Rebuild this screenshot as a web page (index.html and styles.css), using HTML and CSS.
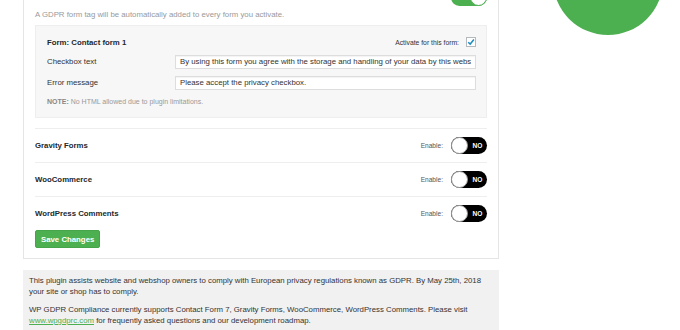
FILE: index.html
```html
<!DOCTYPE html>
<html lang="en">
  <head>
    <meta charset="UTF-8" />
    <title>WP GDPR Compliance</title>
    <link rel="stylesheet" href="styles.css">
  </head>
  <body>
    <div class="page">
      <div class="main">
        <form class="panel">
          <div class="integration">
            <div class="integration-head">
              <h3>Contact Form 7</h3>
              <div class="enable">
                Enable:
                <span class="switch switch-on"><span class="switch-text">YES</span><span class="knob"></span></span>
              </div>
            </div>
            <p class="description">A GDPR form tag will be automatically added to every form you activate.</p>

            <div class="form-box">
              <div class="form-head">
                <strong>Form: Contact form 1</strong>
                <span class="activate">
                  Activate for this form:
                  <span class="checkbox">
                    <svg width="8" height="8" viewBox="0 0 8 8"><path d="M1.2 4.2 L3.2 6.1 L6.9 1.6" fill="none" stroke="#1e8cbe" stroke-width="1.5" /></svg>
                  </span>
                </span>
              </div>
              <div class="field">
                <label>Checkbox text</label>
                <input type="text" value="By using this form you agree with the storage and handling of your data by this website." />
              </div>
              <div class="field">
                <label>Error message</label>
                <input type="text" value="Please accept the privacy checkbox." />
              </div>
              <p class="note"><strong>NOTE:</strong> No HTML allowed due to plugin limitations.</p>
            </div>
          </div>

          <div class="integration">
            <div class="integration-head">
              <h3>Gravity Forms</h3>
              <div class="enable">
                Enable:
                <span class="switch"><span class="knob"></span><span class="switch-text">NO</span></span>
              </div>
            </div>
          </div>

          <div class="integration">
            <div class="integration-head">
              <h3>WooCommerce</h3>
              <div class="enable">
                Enable:
                <span class="switch"><span class="knob"></span><span class="switch-text">NO</span></span>
              </div>
            </div>
          </div>

          <div class="integration">
            <div class="integration-head">
              <h3>WordPress Comments</h3>
              <div class="enable">
                Enable:
                <span class="switch"><span class="knob"></span><span class="switch-text">NO</span></span>
              </div>
            </div>
          </div>

          <button type="button" class="button">Save Changes</button>
        </form>

        <div class="info">
          <p>This plugin assists website and webshop owners to comply with European privacy regulations known as GDPR. By May 25th, 2018 your site or shop has to comply.</p>
          <p>WP GDPR Compliance currently supports Contact Form 7, Gravity Forms, WooCommerce, WordPress Comments. Please visit <a href="#">www.wpgdprc.com</a> for frequently asked questions and our development roadmap.</p>
        </div>
      </div>

      <div class="aside">
        <div class="logo"></div>
      </div>
    </div>
  </body>
</html>
```

FILE: styles.css
```css
html {
  font-family: "Liberation Sans", Arial, sans-serif;
}
body {
  margin: 0;
  background: #fff;
  color: #444;
  font-size: 7.8px;
  line-height: 11px;
}
.page {
  display: flex;
  align-items: flex-start;
  margin-top: -20px;
  padding-left: 23px;
}
.main {
  width: 476px;
}
.panel {
  margin: 0;
  border: 1px solid #e5e5e5;
  padding: 0 11px 10px;
  background: #fff;
}
.integration {
  padding: 8px 0;
  border-top: 1px solid #eee;
}
.integration:first-child {
  border-top: 0;
}
.integration-head {
  display: flex;
  justify-content: space-between;
  align-items: center;
  height: 17px;
}
h3 {
  margin: 0;
  font-size: 7.8px;
  font-weight: bold;
  color: #23282d;
}
.enable {
  display: flex;
  align-items: center;
  gap: 8px;
  font-size: 6.6px;
  color: #555;
}
.switch {
  display: flex;
  align-items: center;
  width: 36px;
  height: 17px;
  border-radius: 9px;
  background: #000;
}
.switch-on {
  background: #4caf50;
}
.knob {
  width: 17px;
  height: 17px;
  box-sizing: border-box;
  border-radius: 50%;
  background: #fff;
  border: 1px solid #999;
}
.switch-on .knob {
  border-color: #4caf50;
}
.switch-text {
  flex: 1;
  text-align: center;
  color: #fff;
  font-weight: bold;
  font-size: 6.6px;
}
.description {
  margin: 2.5px 0 0;
  color: #999;
}
.form-box {
  margin: 5.5px 0 2.5px;
  padding: 10.5px 10px 10.5px 11px;
  background: #f7f7f7;
  border: 1px solid #eee;
}
.form-head {
  display: flex;
  justify-content: space-between;
  align-items: center;
  height: 11px;
  color: #23282d;
}
.activate {
  display: flex;
  align-items: center;
  gap: 7px;
  font-size: 6.8px;
  color: #333;
}
.checkbox {
  display: flex;
  align-items: center;
  justify-content: center;
  width: 10px;
  height: 10px;
  box-sizing: border-box;
  border: 1px solid #b4b9be;
  background: #fff;
}
.field {
  display: grid;
  grid-template-columns: 128px 1fr;
  align-items: center;
  margin-top: 7px;
  color: #333;
}
.field input {
  width: 100%;
  height: 14px;
  box-sizing: border-box;
  margin: 0;
  padding: 0 4px;
  border: 1px solid #ddd;
  box-shadow: inset 0 1px 1px rgba(0, 0, 0, 0.05);
  background: #fff;
  color: #333;
  font-family: "Liberation Sans", Arial, sans-serif;
  font-size: 7.8px;
}
.note {
  margin: 7.5px 0 0;
  font-size: 7px;
  line-height: 9px;
  color: #999;
}
.note strong {
  color: #888;
}
.button {
  display: block;
  height: 18px;
  padding: 0 5px;
  background: #4caf50;
  border: 1px solid #46a44a;
  border-radius: 2px;
  color: #fff;
  font-family: "Liberation Sans", Arial, sans-serif;
  font-size: 7.8px;
  font-weight: bold;
}
.info {
  margin-top: 11px;
  padding: 5px 6px;
  background: #f1f1f1;
  color: #333;
}
.info p {
  margin: 0 0 6px;
  line-height: 11.3px;
}
.info a {
  color: #4caf50;
}
.aside {
  margin-left: 54px;
}
.logo {
  width: 110px;
  height: 110px;
  margin-top: -55px;
  border-radius: 50%;
  background: #4caf50;
}
```
